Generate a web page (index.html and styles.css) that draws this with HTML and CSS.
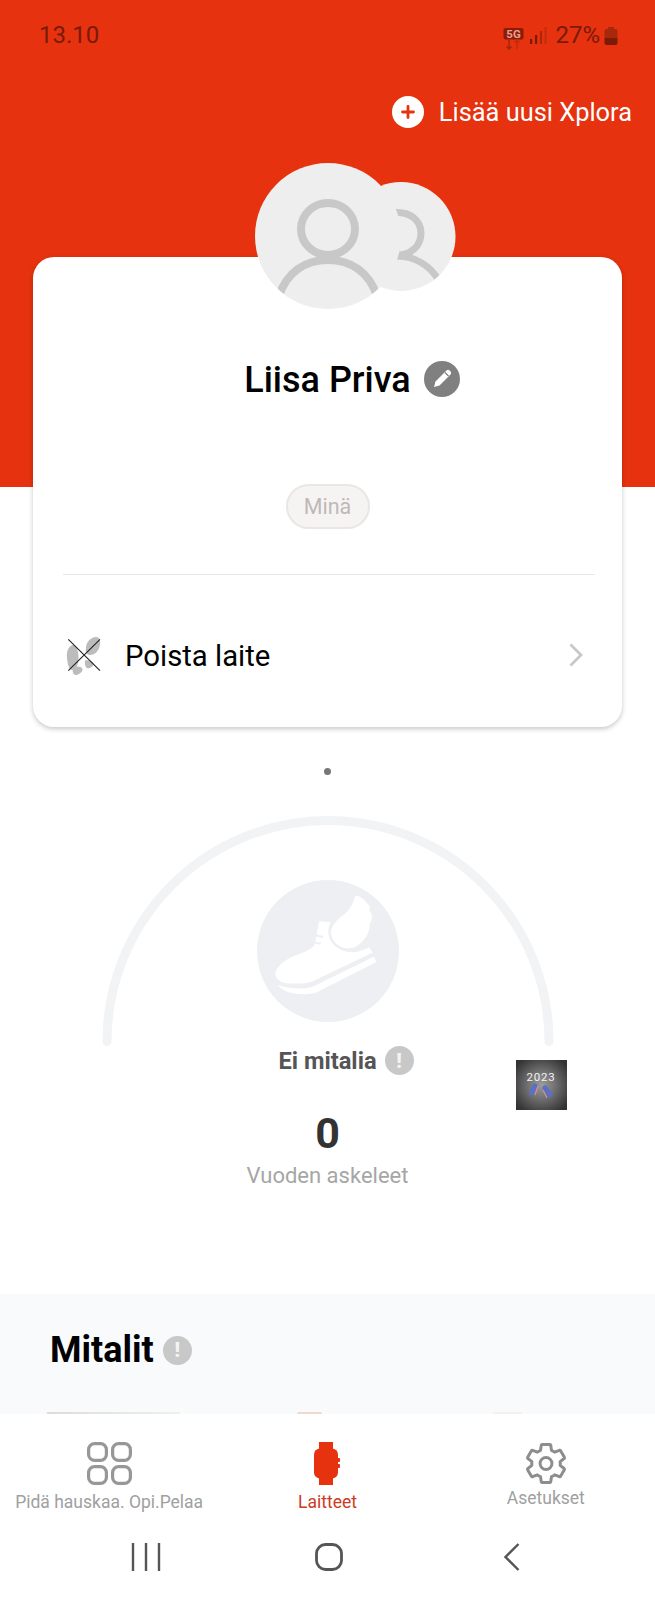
FILE: index.html
```html
<!DOCTYPE html>
<html lang="fi">
<head>
<meta charset="utf-8">
<title>Laitteet</title>
<link rel="stylesheet" href="styles.css">
</head>
<body>
<div class="page">
  <div class="upper">
    <div class="status">
      <span class="time">13.10</span>
      <div class="status-right">
        <svg class="net" width="21" height="22" viewBox="0 0 21 22">
          <rect x="0.5" y="0" width="20" height="11.5" rx="2" fill="#8a1c08"/>
          <text x="10.5" y="9.8" class="net-text">5G</text>
          <path d="M6 12v9M3.5 18.5 6 21l2.5-2.5" fill="none" stroke="#a5260c" stroke-width="1.5"/>
          <path d="M14 21v-9M11.5 14.5 14 12l2.5 2.5" fill="none" stroke="#c22c0d" stroke-width="1.5"/>
        </svg>
        <svg class="signal" width="18" height="17" viewBox="0 0 18 17">
          <rect x="1" y="12" width="2.2" height="5" fill="#7a1a08"/>
          <rect x="6" y="8" width="2.2" height="9" fill="#7a1a08"/>
          <rect x="11" y="4" width="2" height="13" fill="#a8280b"/>
          <rect x="15.5" y="0" width="2" height="17" fill="#c22d0c"/>
        </svg>
        <span class="pct">27%</span>
        <svg class="batt" width="14" height="18" viewBox="0 0 14 18">
          <rect x="4" y="0" width="6" height="2" fill="#a8280b"/>
          <path d="M0.5 4a2 2 0 0 1 2-2h9a2 2 0 0 1 2 2v7h-13z" fill="#a8280b"/>
          <path d="M0.5 11h13v5a2 2 0 0 1-2 2h-9a2 2 0 0 1-2-2z" fill="#7a1a08"/>
        </svg>
      </div>
    </div>
    <div class="add-row">
      <svg width="32" height="32" viewBox="0 0 32 32">
        <circle cx="16" cy="16" r="16" fill="#fff"/>
        <path d="M16 10.500v11M10.500 16h11" stroke="#e6320e" stroke-width="2.800" stroke-linecap="round"/>
      </svg>
      <span class="add-label">Lisää uusi Xplora</span>
    </div>
    <div class="avatars">
      <svg width="206" height="146" viewBox="0 0 206 146">
        <defs>
          <clipPath id="back-clip"><circle cx="146" cy="73.5" r="54.5"/></clipPath>
          <clipPath id="front-clip"><circle cx="73" cy="73" r="73"/></clipPath>
        </defs>
        <circle cx="146" cy="73.5" r="54.5" fill="#eeeeee"/>
        <g clip-path="url(#back-clip)" fill="none" stroke="#c8c8c8" stroke-width="7">
          <path d="M141 49.500C156 49 166 58 166 70C166 83 156 92 142 92"/>
          <path d="M142 93C160 93 176 103 184 118"/>
        </g>
        <circle cx="73" cy="73" r="73" fill="#eeeeee"/>
        <g clip-path="url(#front-clip)" fill="none" stroke="#c8c8c8" stroke-width="8">
          <ellipse cx="73" cy="66" rx="27" ry="26"/>
          <path d="M24 133C32 109 50 97 73 97C96 97 114 109 122 133"/>
        </g>
      </svg>
    </div>
    <section class="card">
      <div class="name-row">
        <span class="name">Liisa Priva</span>
        <svg width="36" height="36" viewBox="0 0 36 36">
          <circle cx="18" cy="18" r="18" fill="#808080"/>
          <path d="M10 26l1.500-5.500L22.500 9.500a2.200 2.200 0 0 1 3 0l1 1a2.200 2.200 0 0 1 0 3L15.500 24.500z" fill="#fff"/>
          <path d="M21 11.500l3.500 3.500" stroke="#808080" stroke-width="1.200"/>
        </svg>
      </div>
      <span class="pill">Minä</span>
      <div class="divider"></div>
      <div class="remove-row">
        <svg width="36" height="40" viewBox="0 0 36 40">
          <path d="M1 22C0 14 4 9 7 9C11 9 12.500 16 12.500 22C12.500 30 9 34 6 34C3 34 1.500 28 1 22Z" fill="#bcbcbc"/>
          <path d="M7 32C10 30 15 30 16.500 33C17 36 12 39.500 9 39C7 38 6 35 7 32Z" fill="#bcbcbc"/>
          <path d="M20 12C20 6 25 1 30 1C34 1 35 6 33.500 11C32 16 28 19 24 19C21 19 19 16 20 12Z" fill="#bcbcbc"/>
          <path d="M19 24.500C22 23.500 27 25 27.500 28C27.500 31 23 33 21 32C19 31 18.500 27 19 24.500Z" fill="#bcbcbc"/>
          <path d="M2.300 3.300L34 34.700M34 3.300L2.300 34.700" stroke="#222" stroke-width="1.100"/>
        </svg>
        <span class="remove-label">Poista laite</span>
        <svg class="chev" width="14" height="24" viewBox="0 0 14 24">
          <path d="M1.500 1.500L12 12L1.500 22.500" fill="none" stroke="#c8c8c8" stroke-width="2.800"/>
        </svg>
      </div>
    </section>
  </div>

  <section class="gauge">
    <span class="dot"></span>
    <svg class="arc" width="456" height="231" viewBox="0 0 456 231">
      <path d="M7 226.500A221 221 0 0 1 449 226.500" fill="none" stroke="#f1f3f5" stroke-width="9" stroke-linecap="round"/>
      <circle cx="228" cy="136" r="71" fill="#eeeff3"/>
      <g transform="translate(140.500 45) scale(0.3333)">
        <path fill="#fff" d="M236 184L270 186C262 205 260 225 272 245C288 268 320 280 345 276C360 274 375 268 386 262L396 278L212 366C186 372 152 372 130 368C112 362 102 350 106 335C112 312 146 292 176 282C195 275 212 268 222 256Z"/>
        <path fill="#fff" stroke="#eeeff3" stroke-width="7" paint-order="stroke" d="M345 107C360 108 372 118 378 128C388 135 390 145 386 152C398 162 396 178 388 190C390 215 372 248 342 262C312 272 280 256 272 224C268 198 292 178 312 162C330 148 338 128 345 107Z"/>
        <path fill="#eeeff3" d="M222 222L248 228L246 234L220 228ZM216 242L242 248L240 254L214 248Z"/>
        <path fill="#fff" d="M112 374C148 388 194 388 216 380L400 290L408 306L226 398C188 408 130 402 112 374Z"/>
      </g>
    </svg>
    <div class="medal-row">
      <span class="medal-label">Ei mitalia</span>
      <span class="bang">!</span>
    </div>
    <span class="steps">0</span>
    <span class="steps-label">Vuoden askeleet</span>
    <svg class="year-badge" width="51" height="50" viewBox="0 0 51 50">
      <defs>
        <radialGradient id="badge-glow" cx="50%" cy="50%" r="62%">
          <stop offset="0" stop-color="#9c9c9c"/>
          <stop offset="0.5" stop-color="#6a6a6a"/>
          <stop offset="1" stop-color="#343434"/>
        </radialGradient>
      </defs>
      <rect width="51" height="50" fill="url(#badge-glow)"/>
      <text x="25" y="21" class="badge-text">2023</text>
      <path d="M19 26L15.500 33M29 28L34 35" stroke="#5a70c4" stroke-width="5" stroke-linecap="round"/>
      <path d="M22 26L19 35M27 30L31 38" stroke="#d88aa0" stroke-width="1.200"/>
    </svg>
  </section>

  <section class="medals">
    <div class="medals-head">
      <h2 class="medals-title">Mitalit</h2>
      <span class="bang">!</span>
    </div>
    <div class="peek">
      <span class="peek-a"></span>
      <span class="peek-b"></span>
      <span class="peek-c"></span>
    </div>
  </section>

  <nav class="bottom">
    <div class="tabs">
      <div class="tab">
        <svg width="45" height="43" viewBox="0 0 45 43" fill="none" stroke="#979797" stroke-width="3.200">
          <rect x="1.600" y="1.600" width="17.800" height="16.800" rx="6"/>
          <rect x="25.600" y="1.600" width="17.800" height="16.800" rx="6"/>
          <rect x="1.600" y="24.600" width="17.800" height="16.800" rx="6"/>
          <rect x="25.600" y="24.600" width="17.800" height="16.800" rx="6"/>
        </svg>
        <span class="tab-label">Pidä hauskaa. Opi.Pelaa</span>
      </div>
      <div class="tab">
        <svg width="26" height="43" viewBox="0 0 26 43" fill="#e6320e">
          <rect x="5" y="0" width="14" height="8"/>
          <rect x="5" y="35" width="14" height="8"/>
          <rect x="0" y="6.500" width="24" height="30" rx="6"/>
          <rect x="23" y="16" width="3" height="4" rx="1"/>
          <rect x="23" y="22" width="3" height="4" rx="1"/>
        </svg>
        <span class="tab-label tab-active">Laitteet</span>
      </div>
      <div class="tab tab-tight">
        <svg width="42" height="43" viewBox="1.400 1.400 21.200 21.200" fill="none" stroke="#8d8d8d" stroke-width="1.500" stroke-linejoin="round">
          <path d="M19.140 12.940c.04-.3.06-.61.06-.94 0-.32-.02-.64-.07-.94l2.030-1.580c.18-.14.230-.41.120-.61l-1.920-3.320c-.12-.22-.37-.29-.59-.22l-2.390.96c-.5-.38-1.030-.7-1.620-.94L14.400 2.810c-.04-.24-.24-.41-.48-.41h-3.840c-.24 0-.43.17-.47.41L9.250 5.350C8.660 5.590 8.120 5.920 7.630 6.290L5.240 5.330c-.22-.08-.47 0-.59.22L2.740 8.870C2.620 9.080 2.660 9.340 2.860 9.480l2.030 1.580C4.840 11.360 4.800 11.690 4.800 12s.02.64.07.94l-2.030 1.580c-.18.14-.23.41-.12.61l1.920 3.320c.12.22.37.29.59.22l2.390-.96c.5.38 1.030.7 1.620.94l.36 2.540c.05.24.24.41.48.41h3.840c.24 0 .44-.17.47-.41l.36-2.540c.59-.24 1.130-.56 1.620-.94l2.390.96c.22.08.47 0 .59-.22l1.920-3.320c.12-.22.07-.47-.12-.61l-2.010-1.580z"/>
          <circle cx="12" cy="12" r="3"/>
        </svg>
        <span class="tab-label">Asetukset</span>
      </div>
    </div>
    <div class="sys">
      <svg width="30" height="28" viewBox="0 0 30 28" stroke="#555" stroke-width="2.400">
        <path d="M2 0v28M15 0v28M28 0v28"/>
      </svg>
      <svg width="28" height="28" viewBox="0 0 28 28">
        <rect x="1.500" y="1.500" width="25" height="25" rx="9" fill="none" stroke="#555" stroke-width="2.800"/>
      </svg>
      <svg width="16" height="28" viewBox="0 0 16 28">
        <path d="M14.500 1L1.500 14L14.500 27" fill="none" stroke="#555" stroke-width="2.400"/>
      </svg>
    </div>
  </nav>
</div>
</body>
</html>
```

FILE: styles.css
```css
* { box-sizing: border-box; }

html, body {
  margin: 0;
  padding: 0;
  background: #fff;
}

body {
  font-family: Roboto, "Liberation Sans", sans-serif;
}

svg { display: block; flex: none; }

.page {
  width: 655px;
  height: 1600px;
  overflow: hidden;
  display: flex;
  flex-direction: column;
}

.upper {
  flex: none;
  height: 727px;
  background: linear-gradient(#e6320e 487px, #fff 487px);
}

.status {
  height: 70px;
  padding: 0 37px 0 39px;
  display: flex;
  align-items: center;
  justify-content: space-between;
  color: #7a1a08;
  font-size: 24px;
}

.status-right {
  display: flex;
  align-items: center;
}

.net { margin-top: 8px; }
.net-text {
  font: 700 11.500px Roboto, sans-serif;
  fill: #e6a090;
  text-anchor: middle;
}
.signal { margin-left: 5px; margin-top: 1px; }
.pct { margin-left: 8px; }
.batt { margin-left: 4px; margin-top: 1px; }

.add-row {
  margin-top: 26px;
  height: 32px;
  padding-right: 23px;
  display: flex;
  align-items: center;
  justify-content: flex-end;
  gap: 15px;
}

.add-label {
  color: #fff;
  font-size: 25.400px;
}

.avatars {
  position: relative;
  z-index: 1;
  margin-top: 35px;
  margin-bottom: -52px;
  padding-left: 255px;
  height: 146px;
}

.card {
  margin: 0 33px;
  height: 470px;
  background: #fff;
  border-radius: 21px;
  box-shadow: 0 2px 5px rgba(0, 0, 0, 0.22);
  display: flex;
  flex-direction: column;
  align-items: center;
}

.name-row {
  margin-top: 104px;
  height: 36px;
  width: 100%;
  padding-left: 49px;
  display: flex;
  align-items: center;
  justify-content: center;
  gap: 13px;
}

.name {
  position: relative;
  top: 1px;
  color: #000;
  font-size: 36px;
  font-weight: 500;
}

.pill {
  margin-top: 87px;
  width: 84px;
  height: 45px;
  border: 2px solid #ebe6e6;
  border-radius: 23px;
  background: #f6f3f3;
  color: #bdb9b9;
  font-size: 21.500px;
  display: flex;
  align-items: center;
  justify-content: center;
}

.divider {
  margin-top: 45px;
  align-self: stretch;
  margin-left: 30px;
  margin-right: 27px;
  height: 1px;
  background: #e8e8e8;
}

.remove-row {
  margin-top: 51px;
  height: 60px;
  align-self: stretch;
  padding: 0 39px 0 33px;
  display: flex;
  align-items: center;
}

.remove-label {
  margin-left: 23px;
  flex: 1;
  color: #000;
  font-size: 29.300px;
}

.chev { margin-top: -2px; }

.gauge {
  position: relative;
  flex: none;
  height: 567px;
  display: flex;
  flex-direction: column;
  align-items: center;
}

.dot {
  margin-top: 41px;
  width: 7px;
  height: 7px;
  border-radius: 50%;
  background: #777;
}

.arc { margin-top: 40px; }

.medal-row {
  height: 29px;
  padding-left: 37px;
  display: flex;
  align-items: center;
  gap: 8px;
}

.medal-label {
  color: #555;
  font-size: 23.700px;
  font-weight: 700;
}

.bang {
  flex: none;
  width: 29px;
  height: 29px;
  border-radius: 50%;
  background: #c8c8c8;
  color: #f4f4f4;
  font-size: 20px;
  font-weight: 900;
  display: flex;
  align-items: center;
  justify-content: center;
}

.steps {
  margin-top: 33px;
  color: #333;
  font-size: 43px;
  font-weight: 700;
  line-height: 50px;
}

.steps-label {
  margin-top: 4px;
  color: #a6a6a6;
  font-size: 22px;
  line-height: 28px;
}

.year-badge {
  position: absolute;
  left: 516px;
  top: 333px;
}

.badge-text {
  font: 400 11.500px Roboto, sans-serif;
  fill: #f2f2f2;
  text-anchor: middle;
  letter-spacing: 0.8px;
}

.medals {
  flex: none;
  height: 120px;
  background: #f8fafc;
  padding-top: 36px;
  display: flex;
  flex-direction: column;
  justify-content: space-between;
}

.medals-head {
  height: 40px;
  padding-left: 50px;
  display: flex;
  align-items: center;
  gap: 9px;
}

.medals-title {
  margin: 0;
  color: #000;
  font-size: 36px;
  font-weight: 700;
}

.peek {
  height: 2px;
  padding-left: 47px;
  display: flex;
  gap: 117px;
}

.peek-a {
  width: 133px;
  background: linear-gradient(90deg, #dcdcdc, #eef0f0);
}

.peek-b {
  width: 25px;
  border-radius: 12px 12px 0 0;
  background: #efd9cc;
}

.peek-c {
  width: 29px;
  margin-left: 54px;
  background: #f1f1f1;
}

.bottom {
  flex: 1;
  background: #fff;
}

.tabs {
  padding-top: 28px;
  display: grid;
  grid-template-columns: repeat(3, 1fr);
  height: 129px;
}

.tab {
  display: flex;
  flex-direction: column;
  align-items: center;
  gap: 6px;
}

.tab-tight { gap: 2px; }

.tab-label {
  color: #a0a0a0;
  font-size: 17.500px;
  line-height: 22px;
  white-space: nowrap;
}

.tab-active { color: #cc3b22; }

.sys {
  padding-left: 54px;
  display: grid;
  grid-template-columns: repeat(3, 183px);
  justify-items: center;
}
```
